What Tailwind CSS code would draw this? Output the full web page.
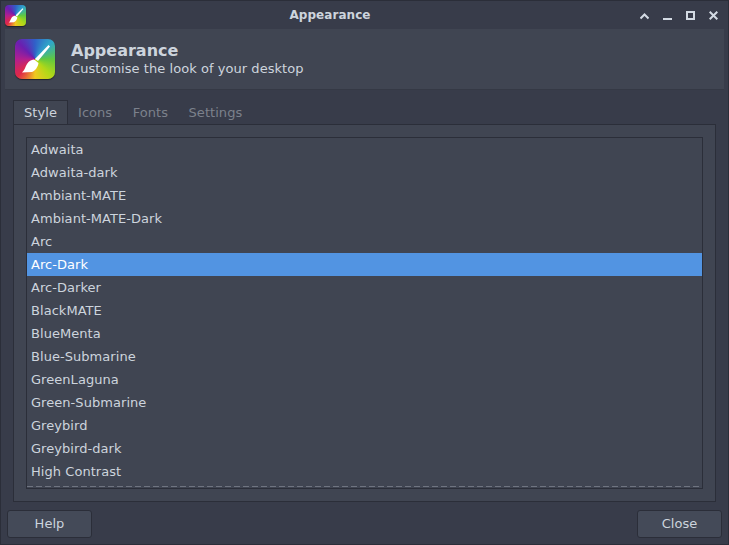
<!DOCTYPE html>
<html lang="en">
<head>
  <meta charset="UTF-8">
  <title>Appearance</title>
  <script src="https://cdn.jsdelivr.net/npm/@tailwindcss/browser@4"></script>
</head>
<body class="bg-[#383c4a]">
  <div class="w-[729px] h-[545px] flex flex-col overflow-hidden bg-[#383c4a] border border-[#2b2e39] font-['DejaVu_Sans',sans-serif] text-[13px] tracking-[0.05px] text-[#cdd4dd]">
    <!-- title bar -->
    <div class="h-[28px] shrink-0 flex items-center justify-between pl-[4px] pr-[10px]">
      <div class="w-[21px] h-[21px] rounded-[4px] overflow-hidden shadow-[0_1px_1px_#20222b] bg-[conic-gradient(from_45deg,#30a8c8,#60c840,#b0d818,#f0c820,#e02848,#b01f90,#6a1fb0,#3060c8,#30a8c8)]">
        <svg viewBox="0 0 40 40" class="w-full h-full"><path d="M33.5 6 L35 7.5 L23 22 L20 20 Z M19 20.5 L23.5 24 C23 28 20 32 17 33 L7 33.5 C10 31 10 28 12 25 C14 22 16 21 19 20.5 Z" fill="#fff"/></svg>
      </div>
      <span class="font-bold text-[12px] tracking-[0.05px] -ml-[6px]">Appearance</span>
      <div class="flex items-center gap-[14px] mt-[1px]">
        <svg width="9" height="9" viewBox="0 0 9 9" fill="none" stroke="#d3dae3" stroke-width="2"><path d="M0.5 7.5 L4.5 3.5 L8.5 7.5"/></svg>
        <svg width="9" height="9" viewBox="0 0 9 9" fill="#d3dae3"><rect x="0" y="7" width="9" height="2"/></svg>
        <svg width="9" height="9" viewBox="0 0 9 9" fill="none" stroke="#d3dae3" stroke-width="2"><rect x="1" y="1" width="7" height="7"/></svg>
        <svg width="9" height="9" viewBox="0 0 9 9" fill="none" stroke="#d3dae3" stroke-width="2"><path d="M0.7 0.7 L8.3 8.3 M8.3 0.7 L0.7 8.3"/></svg>
      </div>
    </div>

    <!-- banner -->
    <div class="mx-[4px] h-[61px] shrink-0 flex items-center gap-[16px] pl-[10px] bg-[#404552] border-b border-[#353945]">
      <div class="w-[40px] h-[40px] rounded-[7px] overflow-hidden shadow-[0_1px_1px_#20222b] bg-[conic-gradient(from_45deg,#30a8c8,#60c840,#b0d818,#f0c820,#e02848,#b01f90,#6a1fb0,#3060c8,#30a8c8)]">
        <svg viewBox="0 0 40 40" class="w-full h-full"><path d="M33.5 6 L35 7.5 L23 22 L20 20 Z M19 20.5 L23.5 24 C23 28 20 32 17 33 L7 33.5 C10 31 10 28 12 25 C14 22 16 21 19 20.5 Z" fill="#fff"/></svg>
      </div>
      <div class="flex flex-col">
        <span class="font-bold text-[16px] leading-[19px] tracking-normal">Appearance</span>
        <span class="text-[13px] leading-[17px]">Customise the look of your desktop</span>
      </div>
    </div>

    <!-- tabs -->
    <div class="mx-[12px] mt-[10px] flex h-[24px] shrink-0">
      <div class="w-[55px] flex items-center justify-center bg-[#404552] border border-b-0 border-[#2b2e39]">Style</div>
      <div class="flex items-center pl-[10px] pt-[1px] gap-[20.5px] text-[#7c818c]">
        <span>Icons</span><span>Fonts</span><span>Settings</span>
      </div>
    </div>
    <div class="mx-[12px] w-[703px] h-[378px] shrink-0 bg-[#404552] border border-[#2b2e39] p-[12px]">
      <div class="h-[352px] border border-[#2b2e39] overflow-hidden relative">
        <div class="h-[23px] flex items-center pl-[4px]">Adwaita</div>
        <div class="h-[23px] flex items-center pl-[4px]">Adwaita-dark</div>
        <div class="h-[23px] flex items-center pl-[4px]">Ambiant-MATE</div>
        <div class="h-[23px] flex items-center pl-[4px]">Ambiant-MATE-Dark</div>
        <div class="h-[23px] flex items-center pl-[4px]">Arc</div>
        <div class="h-[23px] flex items-center pl-[4px] bg-[#5294e2] text-white">Arc-Dark</div>
        <div class="h-[23px] flex items-center pl-[4px]">Arc-Darker</div>
        <div class="h-[23px] flex items-center pl-[4px]">BlackMATE</div>
        <div class="h-[23px] flex items-center pl-[4px]">BlueMenta</div>
        <div class="h-[23px] flex items-center pl-[4px]">Blue-Submarine</div>
        <div class="h-[23px] flex items-center pl-[4px]">GreenLaguna</div>
        <div class="h-[23px] flex items-center pl-[4px]">Green-Submarine</div>
        <div class="h-[23px] flex items-center pl-[4px]">Greybird</div>
        <div class="h-[23px] flex items-center pl-[4px]">Greybird-dark</div>
        <div class="h-[23px] flex items-center pl-[4px]">High Contrast</div>
        <div class="absolute left-0 right-0 bottom-[1px] h-px bg-[repeating-linear-gradient(90deg,#6f7480_0_6px,transparent_6px_9px)]"></div>
      </div>
    </div>

    <!-- buttons -->
    <div class="mx-[6px] mt-[8px] flex justify-between">
      <button class="w-[85px] h-[28px] rounded-[3px] bg-[#444a58] border border-[#2b2e39]">Help</button>
      <button class="w-[85px] h-[28px] rounded-[3px] bg-[#444a58] border border-[#2b2e39]">Close</button>
    </div>
  </div>
</body>
</html>
